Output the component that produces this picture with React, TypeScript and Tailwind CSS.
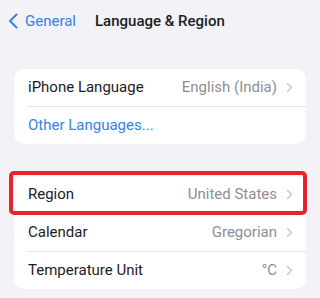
const font = { fontFamily: "Roboto, 'Noto Sans', sans-serif" };

function Chevron() {
  return (
    <svg width="7" height="11" viewBox="0 0 7 11" fill="none" className="ml-[9px]">
      <path d="M1.5 1.5 L5.5 5.5 L1.5 9.5" stroke="#c4c4c8" strokeWidth="1.4" strokeLinecap="round" strokeLinejoin="round" />
    </svg>
  );
}

function Row({ label, value, highlight }: { label: string; value?: string; highlight?: boolean }) {
  return (
    <div className="relative flex h-[37px] items-center pl-[14px] pr-[13px]">
      <span className="text-[15px] text-[#1c1c1e]">{label}</span>
      <span className="ml-auto text-[15px] text-[#8e8e93]">{value}</span>
      <Chevron />
      {highlight && (
        <div className="absolute bottom-[-2px] left-[-5px] right-[-1px] top-[-5px] rounded-[5px] border-4 border-[#e8232b]" />
      )}
    </div>
  );
}

function Divider() {
  return <div className="ml-[14px] h-px bg-[#e3e3e6]" />;
}

export default function App() {
  return (
    <div className="h-[298px] w-[320px] overflow-hidden bg-[#f2f2f7]" style={font}>
      <div className="flex h-[42px] items-center pl-[8px]">
        <svg width="10" height="16" viewBox="0 0 10 16" fill="none">
          <path d="M8.5 1.5 L2 8 L8.5 14.5" stroke="#3283ea" strokeWidth="2" strokeLinecap="round" strokeLinejoin="round" />
        </svg>
        <span className="ml-[7px] text-[15px] text-[#3283ea]">General</span>
        <span className="ml-[19px] text-[15px] font-medium text-[#1c1c1e]">Language &amp; Region</span>
      </div>

      <div className="mx-[14px] mt-[27px] overflow-hidden rounded-[10px] bg-white">
        <Row label="iPhone Language" value="English (India)" />
        <Divider />
        <div className="flex h-[37px] items-center pl-[14px]">
          <span className="text-[15px] text-[#3283ea]">Other Languages...</span>
        </div>
      </div>

      <div className="mx-[14px] mt-[32px] rounded-[10px] bg-white">
        <Row label="Region" value="United States" highlight />
        <Divider />
        <Row label="Calendar" value="Gregorian" />
        <Divider />
        <Row label="Temperature Unit" value="°C" />
      </div>
    </div>
  );
}
